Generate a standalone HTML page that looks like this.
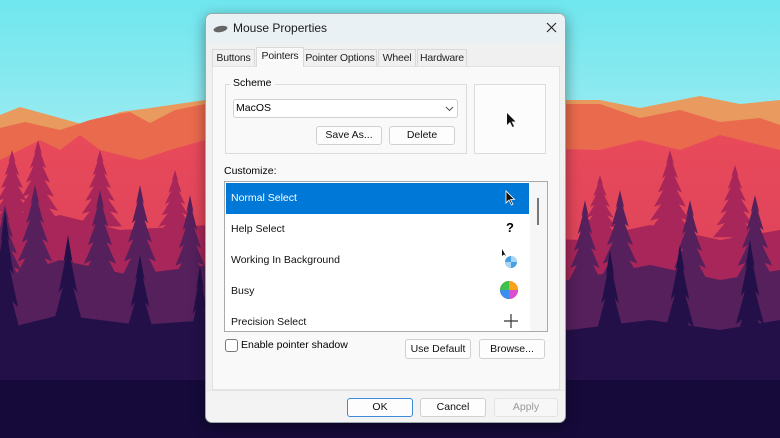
<!DOCTYPE html>
<html><head><meta charset="utf-8"><style>
*{box-sizing:border-box;margin:0;padding:0}
body{width:780px;height:438px;overflow:hidden;position:relative;font-family:"Liberation Sans",sans-serif;font-size:11px;color:#000}
.bg{position:absolute;left:0;top:0}
.dlg{position:absolute;left:205px;top:13px;width:361px;height:410px;background:#f0f0f0;border:1px solid #9aa;border-radius:7px;overflow:hidden;box-shadow:0 4px 14px rgba(0,0,0,.4)}
.title{position:absolute;left:0;top:0;width:100%;height:29px;background:#eaf1f4}
.title span{position:absolute;left:27px;top:7px;font-size:12px;color:#1a1a1a}
.abs{position:absolute}
.tab{position:absolute;top:35px;height:18px;border:1px solid #d9d9d9;border-bottom:none;background:#f0f0f0;font-size:10.5px;text-align:center;line-height:17px;color:#222;white-space:nowrap;letter-spacing:-0.2px}
.panel{position:absolute;left:6px;top:52px;width:348px;height:324px;background:#f9f9f9;border:1px solid #e2e2e2}
.btn{position:absolute;height:19px;background:#fdfdfd;border:1px solid #d0d0d0;border-radius:3px;text-align:center;line-height:17px;font-size:10.5px;color:#111}
.row{position:absolute;left:1px;width:303px;height:31px;line-height:31px;padding-left:5px;font-size:10.5px;color:#111}
</style></head><body>
<svg class="bg" id="bg" width="780" height="438" viewBox="0 0 780 438">
<defs><linearGradient id="sky" x1="0" y1="0" x2="0" y2="1"><stop offset="0" stop-color="#6fe6ee"/><stop offset=".75" stop-color="#d6f3f4"/><stop offset="1" stop-color="#fbefe6"/></linearGradient>
<linearGradient id="rd" x1="0" y1="0" x2="0" y2="1"><stop offset="0" stop-color="#e84a5a"/><stop offset="1" stop-color="#d23a5c"/></linearGradient></defs>
<rect width="780" height="438" fill="url(#sky)"/>
<polygon points="0,115 20,107 85,125 120,112 150,108 205,100 600,100 640,108 700,96 740,104 780,100 780,438 0,438" fill="#e99a5e"/>
<polygon points="0,128 25,122 60,130 90,120 112,115 130,112 150,123 175,110 205,104 600,104 640,118 680,110 720,122 760,118 780,125 780,438 0,438" fill="#ea6a4d"/>
<polygon points="0,160 40,140 60,150 80,135 100,150 140,160 170,150 205,140 600,150 640,140 680,150 720,135 780,150 780,438 0,438" fill="url(#rd)"/>
<g id="t1" fill="#a82659"></g>
<g id="t2" fill="#55205c"></g>
<g id="t3" fill="#231048"></g>
<rect x="0" y="380" width="780" height="58" fill="#150a3a"/>
</svg>
<script>
(function(){
function tree(x,top,w,bottom){var h=bottom-top,p=[[x,top]],n=6;
for(var i=1;i<=n;i++){var y=top+h*0.85*i/n,ww=w*i/n;p.push([x+ww,y]);if(i<n)p.push([x+ww*0.55,y-h*0.025]);}
p.push([x+w*0.15,top+h*0.85],[x+w*0.15,bottom],[x-w*0.15,bottom],[x-w*0.15,top+h*0.85]);
for(var i=n;i>=1;i--){var y=top+h*0.85*i/n,ww=w*i/n;if(i<n)p.push([x-ww*0.55,y-h*0.025]);p.push([x-ww,y]);}
return '<polygon points="'+p.map(function(a){return a[0].toFixed(1)+','+a[1].toFixed(1)}).join(' ')+'"/>';}
function layer(id,list,bottom,hill){var s='<polygon points="'+hill+'"/>';list.forEach(function(t){s+=tree(t[0],t[1],t[2],t[3]||bottom)});document.getElementById(id).innerHTML=s;}
layer('t1',[[12,150,22,240],[38,140,24,240],[100,150,22,240],[175,170,20,250],[600,175,20,250],[670,150,24,250],[735,165,22,250]],250,'0,230 60,215 120,230 210,225 580,240 650,225 720,240 780,230 780,438 0,438');
layer('t2',[[5,205,24],[35,185,26],[100,190,24],[140,185,24],[190,195,22],[585,200,22],[620,190,26],[690,200,24],[755,195,26]],320,'0,280 60,260 130,275 210,265 570,280 650,265 720,280 780,270 780,438 0,438');
layer('t3',[[5,210,26],[68,235,28],[140,255,28],[200,265,22],[610,250,26],[680,245,28],[750,240,28]],438,'0,330 60,315 140,325 210,320 570,330 650,320 720,330 780,320 780,438 0,438');
})();
</script>
<div class="dlg">
<div class="title"><svg class="abs" style="left:7px;top:11px" width="15" height="8"><ellipse cx="7.5" cy="4" rx="7" ry="3" fill="#666" transform="rotate(-10 7.5 4)"/></svg><span>Mouse Properties</span>
<svg class="abs" style="left:340px;top:8px" width="11" height="11"><path d="M1 1L10 10M10 1L1 10" stroke="#222" stroke-width="1.1"/></svg></div>
<div class="tab" style="left:6px;width:43px">Buttons</div>
<div class="tab" style="left:50px;width:48px;top:33px;height:20px;background:#f9f9f9;z-index:2">Pointers</div>
<div class="tab" style="left:97px;width:74px">Pointer Options</div>
<div class="tab" style="left:172px;width:38px">Wheel</div>
<div class="tab" style="left:211px;width:50px">Hardware</div>
<div class="panel">
 <div class="abs" style="left:12px;top:17px;width:242px;height:70px;border:1px solid #dcdcdc"></div>
 <div class="abs" style="left:17px;top:10px;background:#f9f9f9;padding:0 3px;font-size:10.5px">Scheme</div>
 <div class="abs" style="left:20px;top:32px;width:225px;height:19px;background:#fff;border:1px solid #d0d0d0;border-radius:3px;padding-left:2px;line-height:17px;font-size:10.5px">MacOS<svg class="abs" style="left:211px;top:6px" width="9" height="6"><path d="M1 1L4.5 4.5L8 1" stroke="#555" fill="none"/></svg></div>
 <div class="btn" style="left:103px;top:59px;width:66px">Save As...</div>
 <div class="btn" style="left:176px;top:59px;width:66px">Delete</div>
 <div class="abs" style="left:261px;top:17px;width:72px;height:70px;border:1px solid #dcdcdc;background:#fcfcfc"><svg class="abs" style="left:31px;top:27px" width="10" height="16"><path d="M1 1L1 13L4 10L6.5 15L8 14.3L5.6 9.5L9.5 9.5Z" fill="#111"/></svg></div>
 <div class="abs" style="left:11px;top:98px;font-size:10.5px">Customize:</div>
 <div class="abs" style="left:11px;top:114px;width:324px;height:151px;background:#fff;border:1px solid #aaa">
  <div class="row" style="top:1px;background:#0078d7;color:#fff">Normal Select</div>
  <svg class="abs" style="left:280px;top:8px" width="12" height="17"><path d="M1 1L1 13L4 10L6.5 15L8 14.3L5.6 9.5L9.5 9.5Z" fill="#111" stroke="#fff" stroke-width=".8"/></svg>
  <div class="row" style="top:32px">Help Select</div>
  <div class="abs" style="left:281px;top:38px;font-weight:bold;font-size:13px">?</div>
  <div class="row" style="top:63px">Working In Background</div>
  <svg class="abs" style="left:276px;top:66px" width="18" height="22"><path d="M1 1L1 8L3 6.5L5 8Z" fill="#111"/><circle cx="10" cy="14" r="6" fill="#4a9fe0"/><path d="M10 8A6 6 0 0 1 16 14L10 14Z M10 14L4 14A6 6 0 0 0 10 20Z" fill="#a9d6f7"/></svg>
  <div class="row" style="top:94px">Busy</div>
  <svg class="abs" style="left:274px;top:98px" width="20" height="20"><circle cx="10" cy="10" r="9" fill="#f33"/><path d="M10 10L10 1A9 9 0 0 1 19 10Z" fill="#f7a21a"/><path d="M10 10L19 10A9 9 0 0 1 10 19Z" fill="#d94fd0"/><path d="M10 10L10 19A9 9 0 0 1 1 10Z" fill="#3a8ef0"/><path d="M10 10L1 10A9 9 0 0 1 10 1Z" fill="#3cc24a"/></svg>
  <div class="row" style="top:125px">Precision Select</div>
  <svg class="abs" style="left:279px;top:132px" width="14" height="14"><path d="M7 0V14M0 7H14" stroke="#333" stroke-width="1.2"/></svg>
  <div class="abs" style="left:305px;top:0;width:17px;height:149px;background:#f6f6f6"><div class="abs" style="left:7px;top:16px;width:2px;height:27px;background:#777"></div></div>
 </div>
 <div class="abs" style="left:12px;top:272px;width:13px;height:13px;border:1px solid #777;border-radius:3px;background:#fff"></div>
 <div class="abs" style="left:28px;top:272px;font-size:10.5px">Enable pointer shadow</div>
 <div class="btn" style="left:192px;top:272px;width:66px;height:20px;line-height:18px">Use Default</div>
 <div class="btn" style="left:266px;top:272px;width:66px;height:20px;line-height:18px">Browse...</div>
</div>
<div class="abs" style="left:0;top:376px;width:100%;height:34px;background:#f3f3f3;border-top:1px solid #e4e4e4"></div>
<div class="btn" style="left:141px;top:384px;width:66px;border:1.5px solid #3c8ad8;line-height:16px">OK</div>
<div class="btn" style="left:214px;top:384px;width:66px">Cancel</div>
<div class="btn" style="left:288px;top:384px;width:64px;color:#999;background:#f7f7f7;border-color:#e3e3e3">Apply</div>
</div>
</body></html>
